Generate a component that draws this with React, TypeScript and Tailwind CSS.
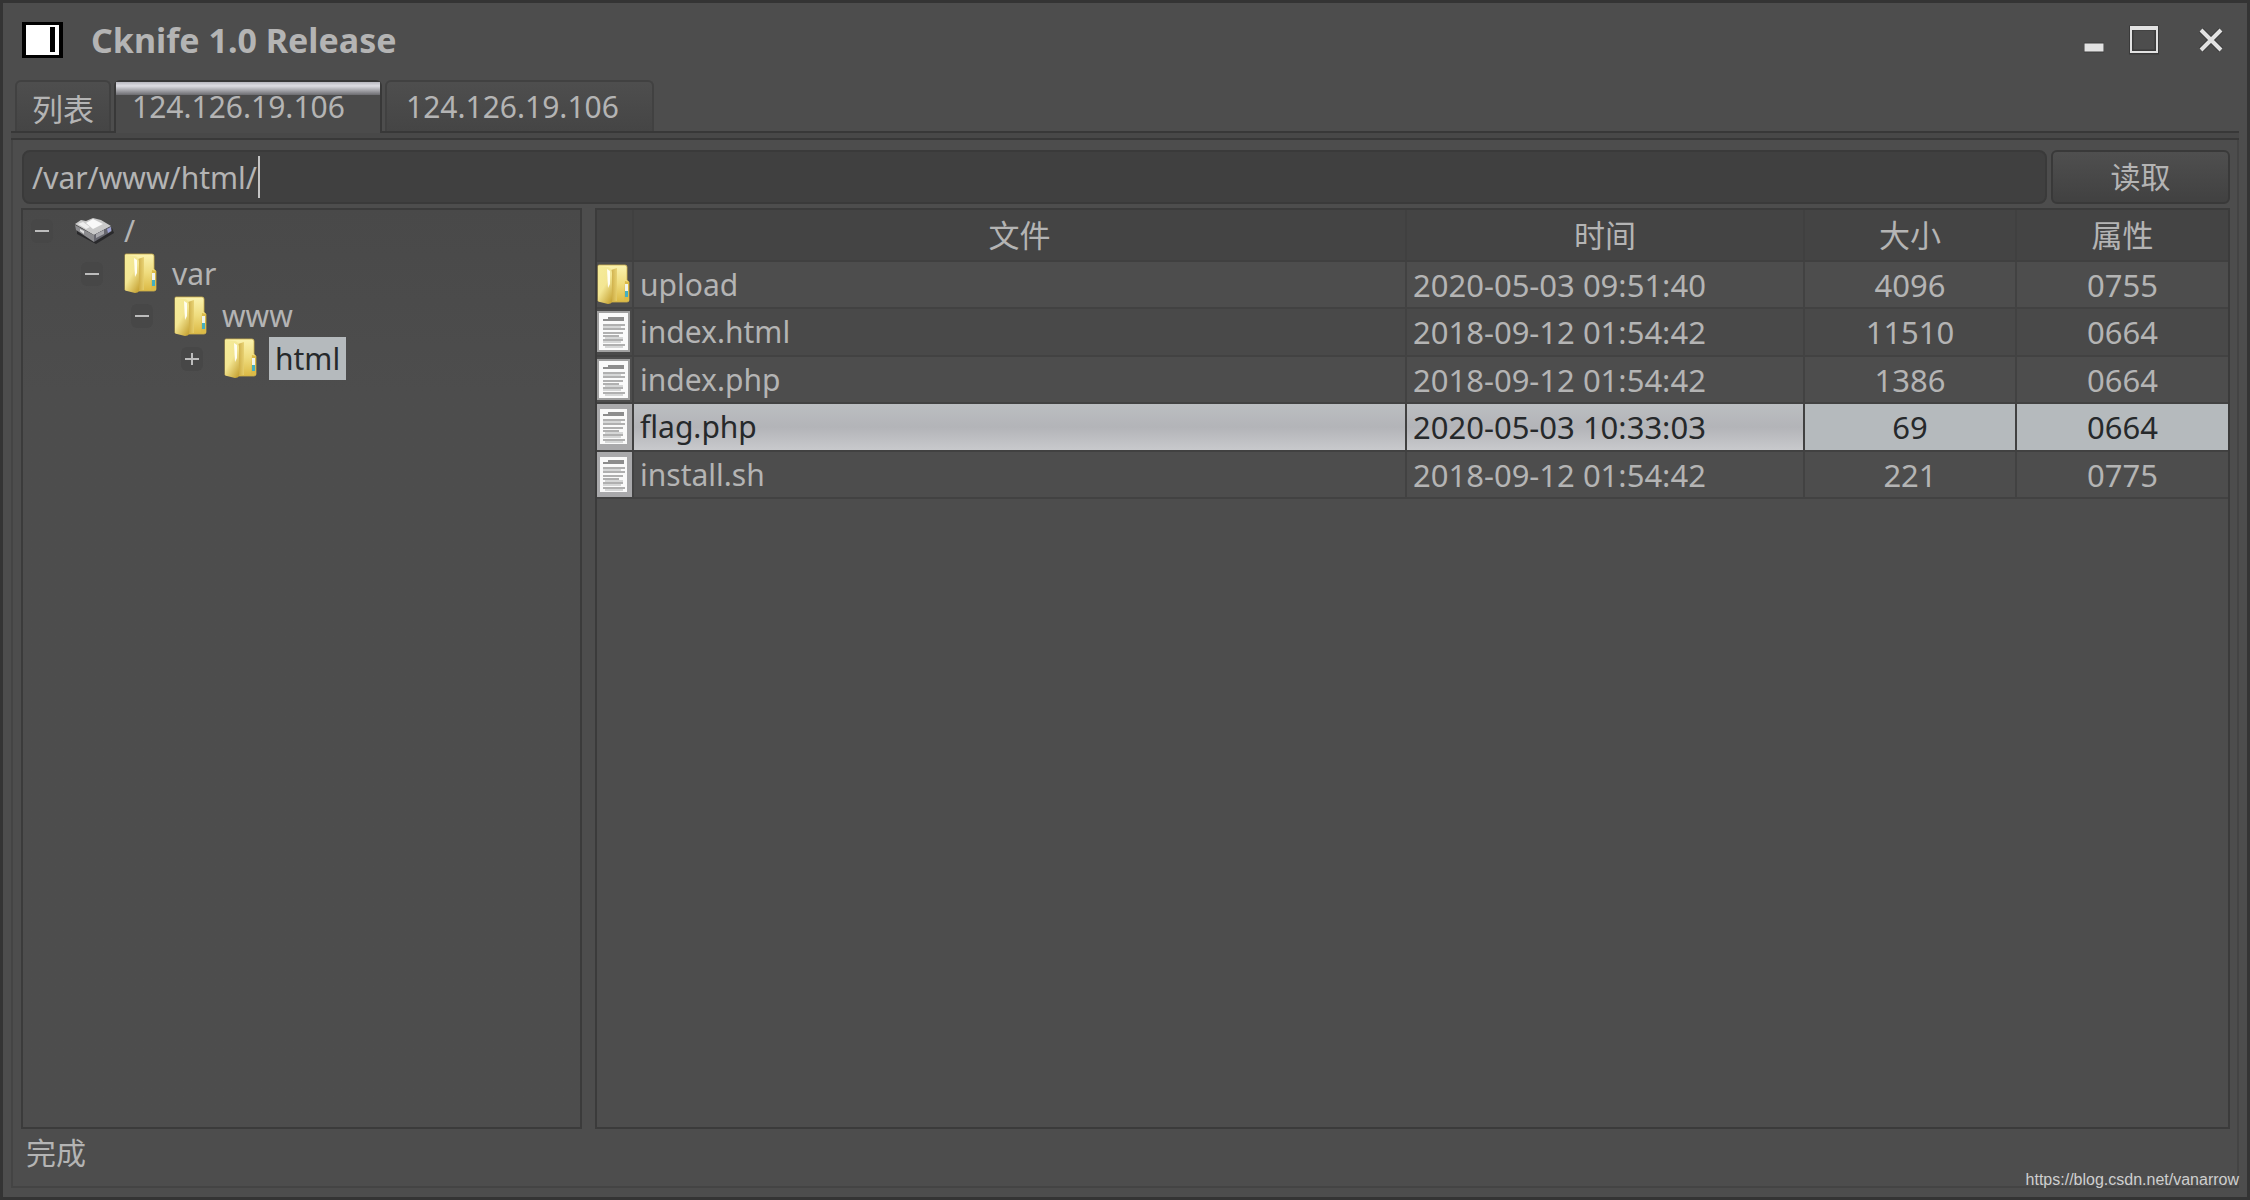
import React from "react";

type FileKind = "folder" | "doc";
type Entry = { kind: FileKind; name: string; time: string; size: string; attr: string; framed?: boolean };

const entries: Entry[] = [
  { kind: "folder", name: "upload", time: "2020-05-03 09:51:40", size: "4096", attr: "0755" },
  { kind: "doc", name: "index.html", time: "2018-09-12 01:54:42", size: "11510", attr: "0664" },
  { kind: "doc", name: "index.php", time: "2018-09-12 01:54:42", size: "1386", attr: "0664" },
  { kind: "doc", name: "flag.php", time: "2020-05-03 10:33:03", size: "69", attr: "0664", framed: true },
  { kind: "doc", name: "install.sh", time: "2018-09-12 01:54:42", size: "221", attr: "0775", framed: true },
];

function FolderIcon() {
  return (
    <svg width="34" height="41" viewBox="0 0 34 41" className="block shrink-0" aria-hidden="true">
      <defs>
        <linearGradient id="folderBack" x1="0" y1="0" x2="0" y2="1">
          <stop offset="0" stopColor="#fbf3b0" />
          <stop offset="0.5" stopColor="#efdc7e" />
          <stop offset="1" stopColor="#dbb945" />
        </linearGradient>
        <linearGradient id="folderFront" x1="0.2" y1="0" x2="0.8" y2="1">
          <stop offset="0" stopColor="#f5eb98" />
          <stop offset="0.5" stopColor="#f3e693" />
          <stop offset="1" stopColor="#c9a73a" />
        </linearGradient>
        <linearGradient id="folderSpine" x1="0" y1="0" x2="1" y2="0">
          <stop offset="0" stopColor="#c6a33c" />
          <stop offset="1" stopColor="#e6cf6e" />
        </linearGradient>
      </defs>
      <path d="M1 2Q1 1 2 1H28Q30 1 30 3V16L32 18V36Q32 38 30 38H14L1 37Z" fill="url(#folderBack)" stroke="#cdb04c" strokeWidth="0.8" />
      <path d="M28 17L32 18V37H27Z" fill="#dcbb48" />
      <path d="M14 6L20 4V37H14Z" fill="url(#folderSpine)" opacity="0.85" />
      <path d="M1 2L11 3Q15 4 15 9V38Q14 40 11 40L3 38Q1 38 1 36Z" fill="url(#folderFront)" />
      <path d="M10 5L13 7V20L11 24Z" fill="#fffff6" opacity="0.95" />
      <rect x="28" y="20" width="3" height="8" fill="#f1f4ec" />
      <rect x="28" y="27" width="3" height="6" fill="#45afc0" />
    </svg>
  );
}

function DocIcon({ framed }: { framed?: boolean }) {
  return (
    <svg width="34" height="42" viewBox="0 0 34 42" className="block shrink-0" aria-hidden="true">
      <rect x="1" y="1" width="31" height="39" fill="#fafafa" stroke={framed ? "#a9a9ab" : "#a0a0a0"} strokeWidth={framed ? 4 : 2} />
      <path d="M11 7H27M6 9H27" stroke="#8d8d8d" strokeWidth="2" />
      <path d="M6 14H28M6 18H28M6 22H26M6 25H22M6 29H26M6 34H28" stroke="#b0b0b0" strokeWidth="2" />
      <path d="M6 16H24M8 27H26M6 31H24M8 36H26" stroke="#d6d7d7" strokeWidth="2" />
    </svg>
  );
}

function DriveIcon() {
  return (
    <svg width="41" height="28" viewBox="0 0 41 28" className="block shrink-0" aria-hidden="true">
      <path d="M3 12L21 4L38 11L40 16L22 27L3 17Z" fill="#29292b" />
      <path d="M1 7L7 3L12 4L19 1L27 3L37 9L20 18Z" fill="#c9c9c9" />
      <path d="M12 6L19 2L29 7L19 12Z" fill="#f8f8f8" />
      <path d="M4 7L9 5L16 10L12 12Z" fill="#eeeeee" />
      <path d="M1 8L20 18V25L2 13Z" fill="#8c8c8f" />
      <path d="M6 12L10 14V17L6 14Z" fill="#dcdcdc" />
      <path d="M20 18L37 9L38 14L20 25Z" fill="#66666e" />
      <path d="M22 17L30 13V17L22 21Z" fill="#a7a7ac" />
      <path d="M33 12L37 10V14L34 16Z" fill="#9ba0d2" />
    </svg>
  );
}

function Toggle({ open, label }: { open: boolean; label: string }) {
  return (
    <button
      type="button"
      aria-label={label}
      aria-expanded={open}
      className="flex h-[24px] w-[22px] shrink-0 items-center justify-center rounded-md bg-[#474747]"
    >
      <svg width="14" height="14" viewBox="0 0 14 14" aria-hidden="true">
        <path d={open ? "M0 7H14" : "M0 7H14M7 1V13"} stroke="#bcbcbc" strokeWidth="2" />
      </svg>
    </button>
  );
}

function TreeRow({ indent, open, name, selected, root }: {
  indent: string;
  open: boolean;
  name: string;
  selected?: boolean;
  root?: boolean;
}) {
  return (
    <li className={"flex items-center odd:h-[42px] even:h-[43px] " + indent}>
      <Toggle open={open} label={name} />
      <span className="ml-[21px] flex shrink-0">{root ? <DriveIcon /> : <FolderIcon />}</span>
      <span
        className={
          selected
            ? "ml-[11px] flex h-full items-center bg-[#b5babd] px-1.5 pt-px text-[#26292b]"
            : root
              ? "ml-[9px]"
              : "ml-[14px]"
        }
      >
        {name}
      </span>
    </li>
  );
}

function Cell({ children, selected, className }: { children: React.ReactNode; selected: boolean; className: string }) {
  return (
    <td
      className={
        "border-r-2 border-b-2 p-0 last:border-r-0 " +
        (selected ? "border-[#414141] text-[#26292b] " : "border-[#424242] ") +
        className
      }
    >
      {children}
    </td>
  );
}

export default function App() {
  const selectedFill = "bg-linear-to-b from-[#bbbec1] via-[#b3b4b8] to-[#c8c9cc]";
  const headCell = "border-r-2 border-b-2 border-[#404040] p-0 text-[31px] font-normal last:border-r-0";
  return (
    <div className="flex min-h-screen flex-col border-[3px] border-[#343434] bg-[#4d4d4d] font-['Noto_Sans','Noto_Sans_CJK_SC',sans-serif] text-[30px] leading-9 text-[#b4b4b4]">
      <header className="flex h-[77px] items-center pr-[24px] pb-1 pl-[19px]">
        <svg width="41" height="36" viewBox="0 0 41 36" aria-hidden="true">
          <rect width="41" height="36" fill="#000" />
          <rect x="4" y="3" width="33" height="30" fill="#fff" />
          <rect x="28" y="5" width="5" height="25" fill="#000" />
        </svg>
        <h1 className="ml-[28px] flex-1 text-[34px] font-bold">Cknife 1.0 Release</h1>
        <div className="flex items-center">
          <button type="button" aria-label="Minimize">
            <svg width="20" height="30" viewBox="0 0 20 30" aria-hidden="true">
              <rect x="0" y="18" width="20" height="9" fill="#e2e2e2" stroke="#3c3c3c" />
            </svg>
          </button>
          <button type="button" aria-label="Maximize" className="ml-[25px]">
            <svg width="30" height="30" viewBox="0 0 30 30" aria-hidden="true">
              <path d="M2 3H28V27H2Z" fill="none" stroke="#3a3a3a" strokeWidth="5" />
              <path d="M2 3H28V27H2Z" fill="none" stroke="#e2e2e2" strokeWidth="2" />
              <rect x="1" y="1" width="28" height="4" fill="#e2e2e2" />
            </svg>
          </button>
          <button type="button" aria-label="Close" className="ml-[40px]">
            <svg width="24" height="30" viewBox="0 0 24 30" aria-hidden="true">
              <path d="M2 5L22 25M22 5L2 25" stroke="#3a3a3a" strokeWidth="6" />
              <path d="M2 5L22 25M22 5L2 25" stroke="#e2e2e2" strokeWidth="4" />
            </svg>
          </button>
        </div>
      </header>

      <div role="tablist" className="mx-[8px] flex h-[51px] items-stretch gap-[3px]">
        <button
          type="button"
          role="tab"
          aria-selected="false"
          className="ml-[4px] flex w-[96px] items-center justify-center rounded-t-md border-2 border-b-0 border-[#414141] bg-linear-to-b from-[#4e4e4e] to-[#454545] pt-1 text-[31px]"
        >
          列表
        </button>
        <button
          type="button"
          role="tab"
          aria-selected="true"
          className="relative z-10 -mb-0.5 flex w-[268px] flex-col rounded-t-md border-2 border-b-0 border-[#383838] bg-[#4b4b4b] pl-[16px] text-left"
        >
          <span className="-ml-[16px] h-[13px] self-stretch bg-linear-to-b from-[#b9b9c0] via-[#dedee4] via-30% to-[#6c6c70]" />
          <span className="-mt-[6px]">124.126.19.106</span>
        </button>
        <button
          type="button"
          role="tab"
          aria-selected="false"
          className="flex w-[269px] items-center rounded-t-md border-2 border-b-0 border-[#414141] bg-linear-to-b from-[#4e4e4e] to-[#454545] pl-[19px]"
        >
          124.126.19.106
        </button>
      </div>

      <main className="mx-[8px] mb-[9px] flex flex-1 flex-col border-2 border-t-0 border-[#444444]">
        <div className="-mx-[2px] h-[9px] border-y-2 border-[#383838] bg-[#484848]" />
        <form className="mt-[10px] flex gap-[4px] pr-[7px] pl-[9px]" onSubmit={(e) => e.preventDefault()}>
          <div className="flex h-[54px] flex-1 items-center rounded-lg border-2 border-[#3a3a3a] bg-[#404040] pl-[8px]">
            <input
              aria-label="Path"
              defaultValue="/var/www/html/"
              className="h-[42px] w-[228px] border-r-2 border-[#c4c4c4] bg-transparent outline-none"
            />
          </div>
          <button
            type="submit"
            className="h-[54px] w-[179px] rounded-md border-2 border-[#393939] bg-linear-to-b from-[#4f4f4f] to-[#414141]"
          >
            读取
          </button>
        </form>

        <div className="mt-[4px] flex flex-1 gap-[13px] pr-[7px] pl-[8px]">
          <aside className="w-[561px] shrink-0 border-2 border-[#3b3b3b] bg-linear-to-b from-[#494949] to-[#4d4d4d] to-20%">
            <ul>
              <TreeRow indent="pl-[8px]" open name="/" root />
              <TreeRow indent="pl-[58px]" open name="var" />
              <TreeRow indent="pl-[108px]" open name="www" />
              <TreeRow indent="pl-[158px]" open={false} name="html" selected />
            </ul>
          </aside>
          <section className="flex-1 border-2 border-[#3b3b3b]">
            <table className="w-full table-fixed border-separate border-spacing-0">
              <colgroup>
                <col className="w-[37px]" />
                <col />
                <col className="w-[398px]" />
                <col className="w-[212px]" />
                <col className="w-[211px]" />
              </colgroup>
              <thead>
                <tr className="h-[52px] bg-[#444444]">
                  <th className={headCell} aria-label="Icon" />
                  <th className={headCell}>文件</th>
                  <th className={headCell}>时间</th>
                  <th className={headCell}>大小</th>
                  <th className={headCell}>属性</th>
                </tr>
              </thead>
              <tbody>
                {entries.map((e) => {
                  const sel = e.name === "flag.php";
                  return (
                    <tr key={e.name} className="odd:h-[47px] even:h-[48px] even:bg-[#494949]">
                      <Cell selected={sel} className={e.framed ? "bg-[#a9a9ab]" : ""}>
                        {e.kind === "folder" ? <FolderIcon /> : <DocIcon framed={e.framed} />}
                      </Cell>
                      <Cell selected={sel} className={"pl-[6px] " + (sel ? selectedFill : "")}>{e.name}</Cell>
                      <Cell selected={sel} className={"pl-[6px] text-[31px] " + (sel ? selectedFill : "")}>{e.time}</Cell>
                      <Cell selected={sel} className={"text-center text-[31px] " + (sel ? "bg-[#b5babd]" : "")}>{e.size}</Cell>
                      <Cell selected={sel} className={"text-center text-[31px] " + (sel ? "bg-[#b5babd]" : "")}>{e.attr}</Cell>
                    </tr>
                  );
                })}
              </tbody>
            </table>
          </section>
        </div>

        <footer className="flex h-[57px] items-start justify-between pl-[13px]">
          <span role="status" className="pt-[6px]">完成</span>
          <a
            href="https://blog.csdn.net/vanarrow"
            className="-mr-0.5 self-end font-['Liberation_Sans',Arial,sans-serif] text-base leading-3 text-[#cfcfcf]"
          >
            https://blog.csdn.net/vanarrow
          </a>
        </footer>
      </main>
    </div>
  );
}
